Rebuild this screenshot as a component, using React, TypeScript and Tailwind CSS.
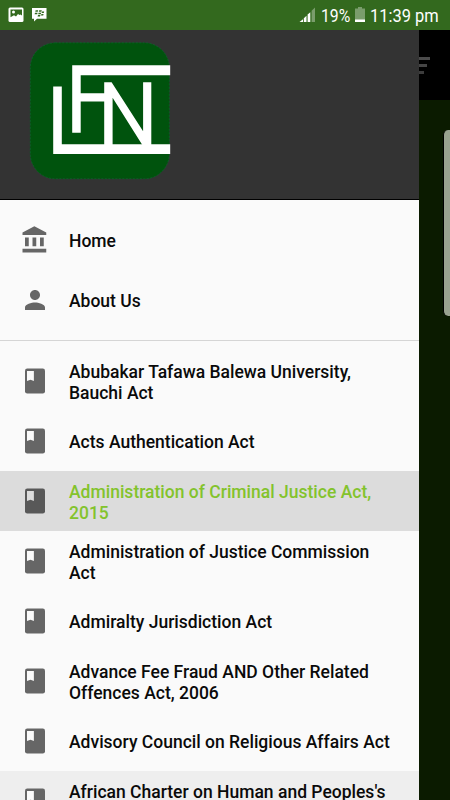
import { clsx } from 'clsx'

interface MenuEntry {
  lines: string[]
  state?: 'selected' | 'pressed'
}

const acts: MenuEntry[] = [
  { lines: ['Abubakar Tafawa Balewa University,', 'Bauchi Act'] },
  { lines: ['Acts Authentication Act'] },
  { lines: ['Administration of Criminal Justice Act,', '2015'], state: 'selected' },
  { lines: ['Administration of Justice Commission', 'Act'] },
  { lines: ['Admiralty Jurisdiction Act'] },
  { lines: ['Advance Fee Fraud AND Other Related', 'Offences Act, 2006'] },
  { lines: ['Advisory Council on Religious Affairs Act'] },
  { lines: ["African Charter on Human and Peoples's", ''], state: 'pressed' },
]

const iconPaths = {
  home: 'M4 10v7h3v-7H4zm6 0v7h3v-7h-3zM2 22h19v-3H2v3zm14-12v7h3v-7h-3zm-4.5-9L2 6v2h19V6l-9.5-5z',
  person:
    'M12 12c2.21 0 4-1.79 4-4s-1.79-4-4-4-4 1.79-4 4 1.79 4 4 4zm0 2c-2.67 0-8 1.34-8 4v2h16v-2c0-2.66-5.33-4-8-4z',
}

function MenuIcon({ path }: { path: string }) {
  return (
    <svg viewBox="0 0 24 24" className="size-[30px] shrink-0 -translate-y-px fill-[#666]">
      <path d={path} />
    </svg>
  )
}

function BookIcon({ selected }: { selected: boolean }) {
  return (
    <svg viewBox="0 0 24 24" className="size-[30px] shrink-0">
      <rect x="4" y="2" width="16" height="20" rx="1.8" className={selected ? 'fill-[#585858]' : 'fill-[#666]'} />
      <path d="M5.6 4h5.5v8L8.4 10.9 5.6 12z" className={selected ? 'fill-[#dcdcdc]' : 'fill-[#fafafa]'} />
    </svg>
  )
}

function StatusBar() {
  return (
    <header className="flex h-[30px] items-center bg-[#33691e] pl-2 text-white">
      <svg viewBox="0 0 16 16" className="size-4">
        <rect x="0.5" y="0.5" width="15" height="14.5" rx="1.5" fill="#fff" />
        <path d="M2.5 2.5h11.5v6l-1.5-1-1 .5-1.5-1-2 2.5L6 8.3l-3.5 2z" fill="#33691e" />
        <circle cx="5.5" cy="5" r="1.5" fill="#fff" />
      </svg>
      <svg viewBox="0 0 16 16" className="ml-[7px] size-4">
        <path d="M1 1h14.5v10.7H6L3 14.5v-2.8H1z" fill="#fff" />
        <g fill="#33691e">
          <path d="M4.6 3.2h2.6l-.4 1.5H4.3zM8.2 3.2h2.6l-.4 1.5H7.8zM4 5.7h2.6L6.2 7.2H3.6zM7.6 5.7h2.6l-.4 1.5H7.2zM11 4.6h2.2l-.4 1.5h-2.2zM10.4 7.1h2.2l-.4 1.5H10zM7 8h2.5L9 9.5H6.6z" />
        </g>
      </svg>
      <div className="flex-1" />
      <svg viewBox="0 0 17 16" className="h-4 w-[17px]">
        <path d="M4 12.3v2.7H.5zM4.8 11.2l2.7-2.4V15H4.8zM8.6 7.6l2.7-2.4V15H8.6z" fill="#fff" />
        <path d="M12.6 3.7L16 .5V15h-3.4z" fill="#fff" opacity="0.35" />
      </svg>
      <div className="ml-[5px] w-[30px]">
        <span className="block origin-left scale-x-[0.83] text-[19px] leading-[31px] whitespace-nowrap">19%</span>
      </div>
      <svg viewBox="0 0 10 16" className="ml-1 h-4 w-[10px]">
        <path d="M3 0h4v1.5h3V15H0V1.5h3z" fill="#fff" opacity="0.35" />
        <path d="M0 12.5h10V15H0z" fill="#fff" />
      </svg>
      <div className="ml-[5px] w-[80px]">
        <span className="block origin-left scale-x-[0.865] text-[19px] leading-[31px] whitespace-nowrap">11:39 pm</span>
      </div>
    </header>
  )
}

function Logo() {
  return (
    <svg viewBox="0 0 142 138" className="h-[138px] w-[142px]">
      <rect x="1.3" y="0.8" width="139" height="136" rx="25" fill="#00530d" stroke="#08682a" strokeWidth="0.8" strokeDasharray="2 1.5" />
      <g fill="#fff">
        <path d="M24.2 44.4h8.6v57.8h108.4v9.8h-117z" />
        <path d="M43.2 23.3h98v9.9H51.7v18h24.5v8.3H51.7v31.3h-8.5z" />
        <path d="M75.2 40.2h7.4l31.5 49V40.2h8.2v63h-8.8L83.6 55.8v47.4h-8.4z" />
      </g>
    </svg>
  )
}

function ActRow({ entry }: { entry: MenuEntry }) {
  const selected = entry.state === 'selected'

  return (
    <li
      className={clsx(
        'flex h-[60px] items-center gap-[19px] pl-5',
        selected && 'bg-[#dcdcdc] text-[#83c32c]',
        entry.state === 'pressed' && 'bg-[#eee]'
      )}
    >
      <BookIcon selected={selected} />
      <span className="pt-[3px] leading-[21px] whitespace-nowrap">
        {entry.lines.map(line => (
          <span key={line} className="block min-h-[21px]">
            {line}
          </span>
        ))}
      </span>
    </li>
  )
}

function Drawer() {
  return (
    <nav className="w-[419px] shrink-0 bg-[#fafafa] text-[17.5px] leading-[20.5px] font-medium text-[#0a0a0a]">
      <div className="h-[170px] border-b border-black bg-[#333] pt-[11.5px] pl-[29px]">
        <Logo />
      </div>
      <ul className="border-b border-[#d5d5d5] pt-[11px] pb-[9px]">
        <li className="flex h-[60px] items-center gap-[19px] pl-5">
          <MenuIcon path={iconPaths.home} />
          Home
        </li>
        <li className="flex h-[60px] items-center gap-[19px] pl-5">
          <MenuIcon path={iconPaths.person} />
          About Us
        </li>
      </ul>
      <ul className="pt-2.5">
        {acts.map(entry => (
          <ActRow key={entry.lines[0]} entry={entry} />
        ))}
      </ul>
    </nav>
  )
}

// Sliver of the page that stays visible beside the open drawer
function DimmedPage() {
  return (
    <main className="flex flex-1 flex-col overflow-hidden bg-[#0b1b00]">
      <div className="h-[70px] bg-black pt-[27px]">
        <div className="h-[3px] w-[11px] bg-[#4b4b4b]" />
        <div className="mt-[4px] h-[3px] w-2 bg-[#454545]" />
        <div className="mt-[4px] h-[3px] w-[5px] bg-[#3c3c3c]" />
      </div>
      <div className="mt-[30px] ml-6 h-[186px] w-10 shrink-0 rounded-l-[5px] border-l border-black bg-[#99a28f]" />
    </main>
  )
}

export default function App() {
  return (
    <div className="flex h-[800px] w-[450px] flex-col overflow-hidden font-['Roboto',sans-serif]">
      <StatusBar />
      <div className="flex h-[770px] overflow-hidden">
        <Drawer />
        <DimmedPage />
      </div>
    </div>
  )
}
